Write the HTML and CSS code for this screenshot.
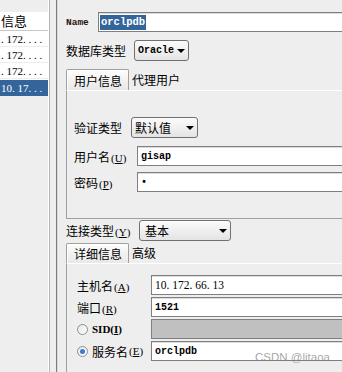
FILE: index.html
```html
<!DOCTYPE html>
<html>
<head>
<meta charset="utf-8">
<link rel="stylesheet" href="styles.css">
</head>
<body>
<div class="app">
  <aside class="side">
    <div class="list">
      <div class="list-head">信息</div>
      <div class="row">. 172. . . .</div>
      <div class="row">. 172. . . .</div>
      <div class="row">. 172. . . .</div>
      <div class="row sel">10. 17. . .</div>
    </div>
  </aside>
  <div class="split"></div>
  <main class="main">
    <div class="line name-line">
      <span class="lbl-name">Name</span>
      <div class="input name-input"><span class="hl">orclpdb</span></div>
    </div>
    <div class="line db-line">
      <span class="lbl">数据库类型</span>
      <div class="combo combo-db"><span class="mono">Oracle</span><i class="arr"></i></div>
    </div>
    <div class="tabs tabs-user">
      <div class="tab on">用户信息</div>
      <div class="tab">代理用户</div>
    </div>
    <div class="panel p-user">
      <div class="line auth-line">
        <span class="lbl">验证类型</span>
        <div class="combo combo-auth"><span>默认值</span><i class="arr"></i></div>
      </div>
      <div class="line user-line">
        <span class="lbl w-user">用户名<span class="mn">(<u>U</u>)</span></span>
        <div class="input grow"><span class="mono">gisap</span></div>
      </div>
      <div class="line pwd-line">
        <span class="lbl w-user">密码<span class="mn">(<u>P</u>)</span></span>
        <div class="input grow"><span class="mono">•</span></div>
      </div>
    </div>
    <div class="line conn-line">
      <span class="lbl w-conn">连接类型<span class="mn">(<u>Y</u>)</span></span>
      <div class="combo combo-conn"><span>基本</span><i class="arr"></i></div>
    </div>
    <div class="tabs tabs-detail">
      <div class="tab on">详细信息</div>
      <div class="tab">高级</div>
    </div>
    <div class="panel p-detail">
      <div class="line host-line">
        <span class="lbl w-host">主机名<span class="mn">(<u>A</u>)</span></span>
        <div class="input grow"><span class="serif">10. 172. 66. 13</span></div>
      </div>
      <div class="line port-line">
        <span class="lbl w-host">端口<span class="mn">(<u>R</u>)</span></span>
        <div class="input grow"><span class="mono">1521</span></div>
      </div>
      <div class="line sid-line">
        <span class="lbl w-radio"><i class="radio"></i><span class="mn sid">SID(<u>I</u>)</span></span>
        <div class="input grow disabled"></div>
      </div>
      <div class="line svc-line">
        <span class="lbl w-radio"><i class="radio on"></i>服务名<span class="mn">(<u>E</u>)</span></span>
        <div class="input grow"><span class="mono">orclpdb</span></div>
      </div>
    </div>
  </main>
</div>
<div class="watermark">CSDN @litaoa</div>
</body>
</html>
```

FILE: styles.css
```css
* { box-sizing: border-box; }
html, body {
  margin: 0;
  width: 342px;
  height: 372px;
  overflow: hidden;
  background: #eeeeee;
  font-family: "Noto Sans CJK SC", "Liberation Sans", sans-serif;
  font-size: 12px;
  color: #000;
}
.app {
  display: flex;
  height: 372px;
}
.side {
  width: 50px;
  flex: none;
  padding-top: 12px;
  border-right: 1px solid #b4b4b4;
  box-shadow: inset -1px 0 #ffffff;
}
.list {
  width: 48px;
  background: #fff;
  overflow: hidden;
  white-space: nowrap;
}
.list-head {
  height: 19px;
  line-height: 18px;
  padding-left: 1px;
  border-bottom: 1px solid #c8c8c8;
  font-size: 13px;
}
.row {
  height: 16px;
  line-height: 16px;
  font-family: "Liberation Serif", serif;
  font-size: 11px;
  border-bottom: 1px solid #ececec;
  padding-left: 1px;
}
.row.sel {
  background: #33659a;
  color: #fff;
  border-bottom: none;
  margin-top: 1px;
  height: 16px;
}
.split {
  width: 7px;
  flex: none;
  border-right: 1px solid #7e7e7e;
}
.main {
  flex: 1;
  min-width: 0;
  padding: 12px 0 0 8px;
  border-left: 1px solid #d8d8d8;
  display: flex;
  flex-direction: column;
  overflow: hidden;
}
.line {
  display: flex;
  align-items: center;
  white-space: nowrap;
}
.lbl { flex: none; }
.mn {
  font-family: "Liberation Serif", serif;
  font-size: 11px;
  margin-left: 1px;
}
.mono {
  font-family: "Liberation Mono", monospace;
  font-weight: bold;
  font-size: 10px;
}
.serif {
  font-family: "Liberation Serif", serif;
  font-size: 11.5px;
}
.lbl-name {
  font-family: "Liberation Mono", monospace;
  font-weight: bold;
  font-size: 9.5px;
  color: #2a1414;
  width: 32px;
  flex: none;
}
.input {
  height: 20px;
  background: #fff;
  border: 1px solid #7f7f7f;
  box-shadow: inset 0 1px #dcdcdc;
  padding-left: 3px;
  display: flex;
  align-items: center;
}
.grow, .name-input {
  flex: 1;
  margin-right: -6px;
}
.input.disabled {
  background: #c0c0c0;
  box-shadow: none;
}
.hl {
  background: #33659a;
  color: #fff;
  font-family: "Liberation Mono", monospace;
  font-weight: bold;
  font-size: 10.5px;
  line-height: 15px;
  padding: 0 1px;
  margin-left: -2px;
}
.db-line { margin-top: 8px; }
.db-line .lbl { width: 68px; }
.combo {
  height: 21px;
  border: 1px solid #707070;
  border-radius: 3px;
  background: linear-gradient(#fbfbfb, #e4e4e4);
  display: flex;
  align-items: center;
  padding-left: 3px;
  flex: none;
}
.arr {
  margin-left: auto;
  margin-right: 3px;
  width: 0;
  height: 0;
  border-left: 4px solid transparent;
  border-right: 4px solid transparent;
  border-top: 4px solid #000;
}
.combo-db { width: 55px; }
.tabs {
  display: flex;
  align-items: flex-end;
  height: 21px;
}
.tabs-user { margin-top: 8px; }
.tabs-detail { margin-top: 2px; height: 20px; }
.tab {
  height: 21px;
  padding: 2px 6px 0 3px;
  line-height: 18px;
}
.tabs-detail .tab { height: 20px; padding-top: 1px; }
.tab.on {
  width: 63px;
  padding-left: 7px;
  border: 1px solid #a0a0a0;
  border-bottom: none;
  border-radius: 2px 2px 0 0;
  background: linear-gradient(#fdfdfd, #e8e8e8);
  box-shadow: inset 1px 1px #fff;
}
.panel {
  border-left: 1px solid #a0a0a0;
  border-top: 1px solid #ffffff;
  margin-right: -6px;
}
.p-user {
  height: 129px;
  border-bottom: 1px solid #a0a0a0;
  padding: 26px 0 0 7px;
}
.auth-line .lbl { width: 57px; }
.combo-auth { width: 67px; height: 21px; }
.user-line { margin-top: 8px; }
.pwd-line { margin-top: 6px; }
.w-user { width: 63px; }
.conn-line { margin-top: 1px; }
.w-conn { width: 73px; }
.combo-conn { width: 92px; padding-left: 5px; }
.p-detail {
  flex: 1;
  padding: 11px 0 0 10px;
}
.w-host { width: 74px; }
.w-radio {
  width: 74px;
  display: flex;
  align-items: center;
}
.port-line, .sid-line, .svc-line { margin-top: 2px; }
.radio {
  width: 11px;
  height: 11px;
  border-radius: 50%;
  border: 1px solid #8e8f8f;
  background: linear-gradient(135deg, #e6e6e6, #ffffff);
  margin-right: 4px;
  flex: none;
  display: flex;
  align-items: center;
  justify-content: center;
}
.radio.on::after {
  content: "";
  width: 5px;
  height: 5px;
  border-radius: 50%;
  background: #3e7bd0;
}
.sid { margin-left: 0; font-weight: bold; }
.watermark {
  position: absolute;
  left: 255px;
  top: 351px;
  font-family: "Liberation Sans", sans-serif;
  font-size: 11.5px;
  color: rgba(125, 125, 125, 0.7);
}
```
